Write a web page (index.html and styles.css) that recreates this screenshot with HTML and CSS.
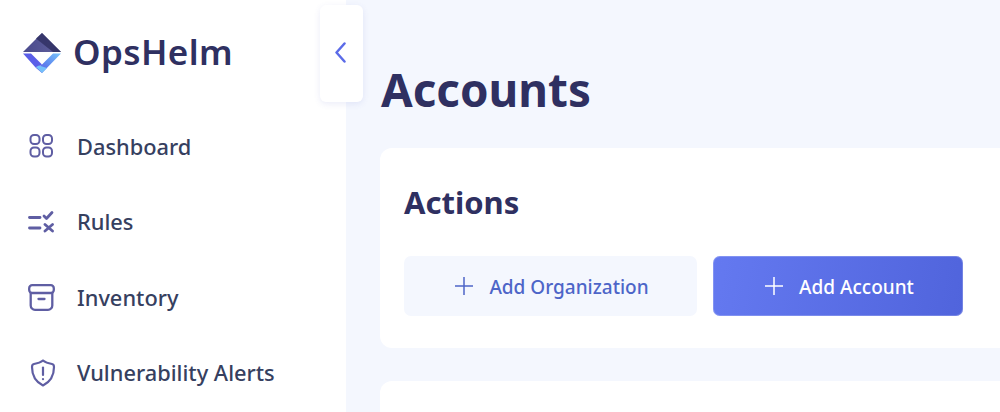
FILE: index.html
```html
<!DOCTYPE html>
<html lang="en">
	<head>
		<meta charset="UTF-8">
		<meta name="viewport" content="width=device-width, initial-scale=1.0">
		<title>Accounts - OpsHelm</title>
		<link rel="stylesheet" href="styles.css">
	</head>
	<body>
		<div class="layout">
			<aside class="sidebar">
				<div class="brand">
					<svg class="brand-mark" width="40" height="42" viewBox="0 0 40 42">
						<defs>
							<linearGradient id="markTop" x1="0" y1="0" x2="1" y2="0">
								<stop offset="0" stop-color="#4a4a8c"/>
								<stop offset="0.7" stop-color="#5a5a98"/>
								<stop offset="1" stop-color="#4a4a88"/>
							</linearGradient>
							<linearGradient id="markRight" x1="0" y1="1" x2="1" y2="0">
								<stop offset="0" stop-color="#5b4fe0"/>
								<stop offset="0.5" stop-color="#5f8cf0"/>
								<stop offset="1" stop-color="#78c4fa"/>
							</linearGradient>
						</defs>
						<path d="M20 1 L39 20 H1 Z" fill="url(#markTop)"/>
						<path d="M20 1 L39 20 H31 L14 6.500 Z" fill="#2e2e60" opacity="0.8"/>
						<path d="M1 21.500 H9 L20 32.500 L14 36 Z" fill="#5a5ee8"/>
						<path d="M39 21.500 H31 L20 32.500 L14 36 L20 41 Z" fill="url(#markRight)"/>
						<path d="M20 41 L14 35 L17 33.500 L25 36 Z" fill="#74c0fa"/>
					</svg>
					<span class="brand-name">OpsHelm</span>
				</div>
				<nav class="nav">
					<a class="nav-item">
						<svg class="nav-icon" viewBox="0 0 26 26" width="26" height="26" fill="none" stroke="#5f5ea3" stroke-width="2">
							<rect x="2.500" y="2" width="9" height="9" rx="3.500"/>
							<rect x="15" y="2" width="9" height="9" rx="3.500"/>
							<rect x="2.500" y="14.500" width="9" height="9" rx="3.500"/>
							<rect x="15" y="14.500" width="9" height="9" rx="3.500"/>
						</svg>
						<span>Dashboard</span>
					</a>
					<a class="nav-item">
						<svg class="nav-icon" viewBox="0 0 26 26" width="26" height="26" fill="none" stroke="#5f5ea3" stroke-width="2.800" stroke-linecap="round" stroke-linejoin="round">
							<path d="M1.500 8.500 H12"/>
							<path d="M1.500 19 H12"/>
							<path d="M16 7 L18.500 9.500 L24 3.500"/>
							<path d="M17 15.500 L24.500 22 M24.500 15.500 L17 22"/>
						</svg>
						<span>Rules</span>
					</a>
					<a class="nav-item">
						<svg class="nav-icon icon-box" viewBox="0 0 27 27" width="27" height="27" fill="none" stroke="#5f5ea3" stroke-width="2.300" stroke-linecap="round" stroke-linejoin="round">
							<rect x="1.200" y="1.200" width="24.600" height="7.800" rx="3"/>
							<path d="M2.700 9 V21.500 A4.300 4.300 0 0 0 7 25.800 H20 A4.300 4.300 0 0 0 24.300 21.500 V9"/>
							<path d="M10.500 15 H16.500"/>
						</svg>
						<span>Inventory</span>
					</a>
					<a class="nav-item">
						<svg class="nav-icon icon-shield" viewBox="0 0 26 28" width="26" height="28" fill="none" stroke="#5f5ea3" stroke-width="2.200" stroke-linecap="round" stroke-linejoin="round">
							<path d="M13 1.500 C16 4 19 4.500 22 5 C23.500 5.300 24 6 24 8 C24 17 20 23 13 26.500 C6 23 2 17 2 8 C2 6 2.500 5.300 4 5 C7 4.500 10 4 13 1.500 Z"/>
							<path d="M13 8.500 V16"/>
							<path d="M13 20 V20.200"/>
						</svg>
						<span>Vulnerability Alerts</span>
					</a>
				</nav>
			</aside>

			<button class="collapse" type="button">
				<svg viewBox="0 0 11 21" width="11" height="21" fill="none" stroke="#5b6be8" stroke-width="2.500" stroke-linecap="round" stroke-linejoin="round">
					<path d="M9.500 1.500 L1.500 10.500 L9.500 19.500"/>
				</svg>
			</button>

			<main class="main">
				<h1>Accounts</h1>
				<section class="card">
					<h2>Actions</h2>
					<div class="actions">
						<button class="btn btn-org" type="button">
							<svg viewBox="0 0 18 18" width="18" height="18" stroke="currentColor" stroke-width="1.500"><path d="M9 0 V18 M0 9 H18"/></svg>
							<span class="btn-label">Add Organization</span>
						</button>
						<button class="btn btn-account" type="button">
							<svg viewBox="0 0 18 18" width="18" height="18" stroke="currentColor" stroke-width="1.500"><path d="M9 0 V18 M0 9 H18"/></svg>
							<span class="btn-label">Add Account</span>
						</button>
					</div>
				</section>
				<section class="card"></section>
			</main>
		</div>
	</body>
</html>
```

FILE: styles.css
```css
html, body {
    margin: 0;
    height: 100%;
    overflow: hidden;
}

body {
    font-family: "Noto Sans", "Open Sans", sans-serif;
    background-color: #f4f7fe;
    color: #2d2d5f;
}

.layout {
    display: flex;
    position: relative;
    width: 1000px;
    height: 412px;
    overflow: hidden;
}

.sidebar {
    flex: none;
    width: 346px;
    background-color: #ffffff;
}

.brand {
    display: flex;
    align-items: center;
    gap: 11px;
    height: 42px;
    padding: 32px 0 0 22px;
}

.brand-mark {
    flex: none;
}

.brand-name {
    margin-top: -4px;
    font-size: 35px;
    font-weight: 600;
    letter-spacing: 0.4px;
    color: #2f3061;
}

.nav {
    display: flex;
    flex-direction: column;
    gap: 35.5px;
    padding: 52px 0 0 28px;
}

.nav-item {
    display: flex;
    align-items: center;
    height: 40px;
    font-size: 21.8px;
    font-weight: 500;
    color: #36405f;
}

.nav-icon {
    flex: none;
    margin-right: 23px;
}

.icon-box {
    margin-right: 22px;
}

.icon-shield {
    margin-left: 2px;
    margin-right: 21px;
}

.collapse {
    position: absolute;
    top: 5px;
    left: 320px;
    width: 43px;
    height: 97px;
    padding: 0 3px 2px 0;
    display: flex;
    align-items: center;
    justify-content: center;
    background-color: #ffffff;
    border: none;
    border-radius: 6px;
    box-shadow: 0 2px 6px rgba(90, 100, 200, 0.12);
}

.main {
    flex: none;
    width: 700px;
    padding-left: 34px;
}

h1 {
    margin: 56px 0 0 1px;
    font-size: 45.8px;
    line-height: 66px;
    font-weight: 700;
    color: #2f3061;
}

.card {
    height: 200px;
    box-sizing: border-box;
    margin-top: 26px;
    padding: 31px 24px 0;
    background-color: #ffffff;
    border-radius: 12px;
}

.card + .card {
    margin-top: 33px;
}

h2 {
    margin: 0;
    font-size: 31px;
    line-height: 46px;
    font-weight: 700;
    color: #2f3061;
}

.actions {
    display: flex;
    gap: 16px;
    margin-top: 31px;
}

.btn {
    display: flex;
    align-items: center;
    justify-content: center;
    gap: 16px;
    height: 60px;
    padding: 0 0 0 3px;
    border: none;
    border-radius: 7px;
    font-family: inherit;
    font-size: 19px;
    font-weight: 500;
}

.btn-label {
    margin-top: 2px;
}

.btn-org {
    width: 293px;
    background-color: #f4f7fe;
    color: #4d65c8;
}

.btn-account {
    width: 250px;
    background: linear-gradient(100deg, #6479f0, #5064dc);
    color: #ffffff;
    box-shadow: inset 0 0 0 1px rgba(255, 255, 255, 0.2);
}
```
